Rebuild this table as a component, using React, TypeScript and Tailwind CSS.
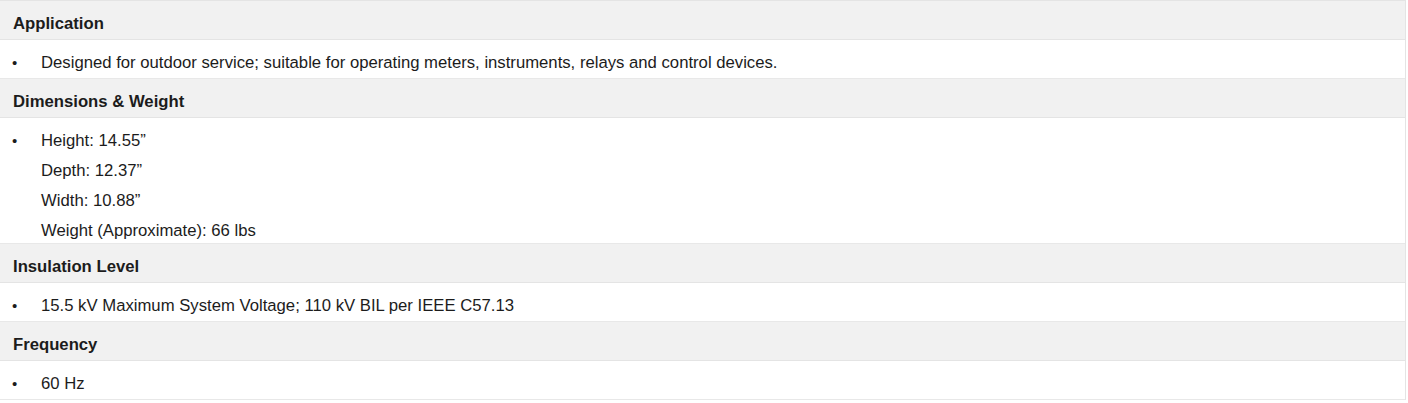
import React from "react";

type Section = { title: string; items: string[] };

const sections: Section[] = [
  {
    title: "Application",
    items: [
      "Designed for outdoor service; suitable for operating meters, instruments, relays and control devices.",
    ],
  },
  {
    title: "Dimensions & Weight",
    items: ["Height: 14.55\u201D", "Depth: 12.37\u201D", "Width: 10.88\u201D", "Weight (Approximate): 66 lbs"],
  },
  {
    title: "Insulation Level",
    items: ["15.5 kV Maximum System Voltage; 110 kV BIL per IEEE C57.13"],
  },
  {
    title: "Frequency",
    items: ["60 Hz"],
  },
];

export default function App() {
  return (
    <div className="w-[1408px] bg-white font-['Liberation_Sans',Arial,sans-serif] text-[16.7px] text-[#1c1c1c]">
      <div className="w-[1406px] border-t border-r border-[#e4e4e4]">
        {sections.map((s) => {
          const multi = s.items.length > 1;
          return (
            <div key={s.title}>
              <div className="bg-[#f1f1f1] border-b border-[#e4e4e4] h-[39px] pt-[8px] pl-[13px] leading-[30px] text-[16.7px] font-bold">
                {s.title}
              </div>
              <div className={multi ? "border-b border-[#e8e8e8] pt-[8px] flex h-[126px] overflow-hidden" : "border-b border-[#e8e8e8] pt-[8px] flex h-[39px]"}>
                <div className="w-[41px] pl-[12px] leading-[30px] shrink-0 text-[15px]">•</div>
                <div className="flex flex-col">
                  {s.items.map((it) => (
                    <div key={it} className="leading-[30px] shrink-0">
                      {it}
                    </div>
                  ))}
                </div>
              </div>
            </div>
          );
        })}
      </div>
    </div>
  );
}
